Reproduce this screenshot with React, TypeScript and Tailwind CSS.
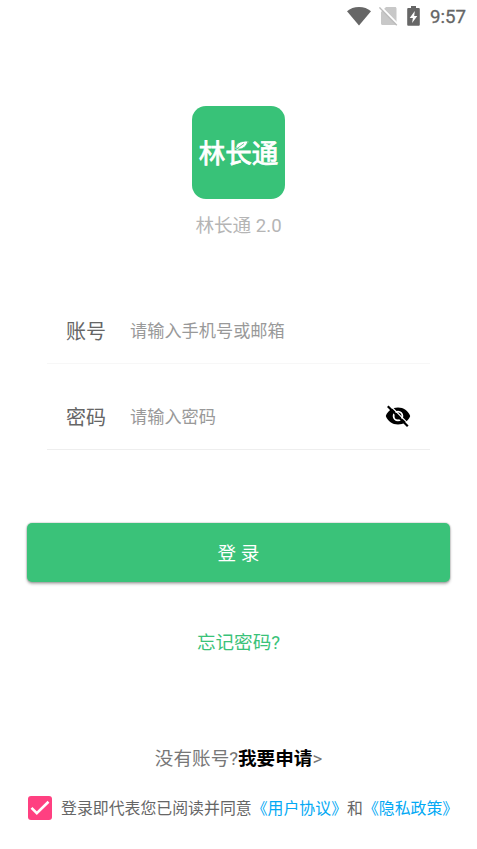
import { useState } from 'react'

const fields = [
  { name: 'account', label: '账号', placeholder: '请输入手机号或邮箱', type: 'text', border: 'border-[#f7f7f7]' },
  { name: 'password', label: '密码', placeholder: '请输入密码', type: 'password', border: 'border-[#eeeeee]' },
]

function StatusBar() {
  return (
    <div className="flex h-8 items-center justify-end pr-[11px] text-[#666666]">
      <svg width="24" height="19" viewBox="0 0 24 19" fill="currentColor">
        <path d="M0 4.300C3.200 1.500 7.300 0 12 0s8.800 1.500 12 4.300L12 18.600z" />
      </svg>
      <svg width="19" height="20" viewBox="0 0 19 20" className="ml-2">
        <path d="M7 1h9c.9 0 1.500.6 1.500 1.500v15c0 .9-.6 1.500-1.500 1.500H3.500c-.9 0-1.500-.6-1.500-1.500V6z" fill="#c8c8c8" />
        <path d="M1.300.6 18.800 18.400" stroke="#ffffff" strokeWidth="2.400" />
        <path d="M.4 1.400 17.800 19.200" stroke="#bcbcbc" strokeWidth="1.500" />
      </svg>
      <svg width="13" height="20" viewBox="0 0 13 20" className="ml-[9px]">
        <path d="M4 0h5v2h2.500c.8 0 1.300.5 1.300 1.300v15.200c0 .8-.5 1.300-1.300 1.300h-10C.7 19.800.2 19.300.2 18.500V3.300C.2 2.500.7 2 1.500 2H4z" fill="currentColor" />
        <path d="M7.800 5 2.700 12h3.200l-.8 5 5.200-7H7.200z" fill="#ffffff" />
      </svg>
      <span className="ml-[10px] pt-px text-[18.7px] leading-8 [-webkit-text-stroke:0.3px_#666666]">9:57</span>
    </div>
  )
}

function Logo() {
  return (
    <div className="relative flex h-[93px] w-[93px] items-center justify-center rounded-[14px] bg-[#38c278]">
      <span className="pt-0.5 text-[26.5px] leading-[30px] font-normal whitespace-nowrap text-white [-webkit-text-stroke:0.8px_#ffffff]">
        林长通
      </span>
      {/* Leaf resting on the middle character */}
      <svg className="absolute inset-0" width="93" height="93" viewBox="0 0 93 93" fill="none">
        <path d="M44 42c-.5-4.500 4-7 12-7-1.500 5.500-5 8.500-10 8z" fill="#ffffff" stroke="#38c278" strokeWidth=".8" />
        <path d="m45 42.500 7-5" stroke="#38c278" strokeWidth=".8" />
      </svg>
    </div>
  )
}

function EyeOff() {
  return (
    <svg width="28" height="28" viewBox="0 0 28 28">
      <path
        fill="#000000"
        fillRule="evenodd"
        d="M14 5.500C8.500 5.500 3.800 8.600 1.800 14c2 5.400 6.700 8.500 12.200 8.500s10.200-3.100 12.200-8.500c-2-5.400-6.700-8.500-12.200-8.500zM14 19.300a5.300 5.300 0 1 1 0-10.600 5.300 5.300 0 0 1 0 10.600zm0-8.800a3.500 3.500 0 1 0 0 7 3.500 3.500 0 0 0 0-7z"
      />
      <path d="M5.600 3 25.500 22.900" stroke="#ffffff" strokeWidth="1.200" />
      <path d="M3.800 4.200 23.800 24.200" stroke="#000000" strokeWidth="2.200" />
    </svg>
  )
}

export default function App() {
  const [visible, setVisible] = useState(false)
  const [agreed, setAgreed] = useState(true)

  return (
    <div className="flex h-[849px] w-[477px] flex-col overflow-hidden bg-white font-['Roboto','Noto_Sans_CJK_SC',sans-serif]">
      <StatusBar />

      <header className="mt-[74px] flex flex-col items-center">
        <Logo />
        <h1 className="mt-[13px] text-[18.6px] leading-7 text-[#b5b5b5]">林长通 2.0</h1>
      </header>

      <form className="mt-[37px] flex flex-col px-[47px]">
        {fields.map((field) => (
          <label
            key={field.name}
            className={`flex h-[86px] items-end border-b pb-[17px] pl-[19px] first:h-[87px] ${field.border}`}
          >
            <span className="-mb-px w-16 text-[20px] leading-[30px] text-[#666666]">{field.label}</span>
            <input
              type={field.type === 'password' && visible ? 'text' : field.type}
              placeholder={field.placeholder}
              className="h-[30px] min-w-0 flex-1 text-[17.2px] leading-[30px] outline-none placeholder:text-[#999999]"
            />
            {field.type === 'password' && (
              <button type="button" onClick={() => setVisible(!visible)} className="mr-[18px] mb-0.5">
                <EyeOff />
              </button>
            )}
          </label>
        ))}
      </form>

      <button className="mx-[27px] mt-[73px] h-[59px] shrink-0 rounded-[5px] bg-[#3ac279] pt-1 text-[18.6px] text-white shadow-[0_0_1px_1px_rgba(0,0,0,0.1),0_2px_3px_rgba(0,0,0,0.3)]">
        登 录
      </button>

      <a href="#" className="mt-[47px] self-center text-[18.6px] leading-7 text-[#3ac279]">
        忘记密码?
      </a>

      <p className="mt-[88px] text-center text-[18.6px] leading-7 text-[#777777]">
        没有账号?<a href="#" className="font-bold text-black">我要申请</a>&gt;
      </p>

      <div className="mt-[23px] flex items-center pl-7">
        <button
          onClick={() => setAgreed(!agreed)}
          className="flex h-6 w-6 items-center justify-center rounded-[3px] bg-[#ff4081]"
        >
          {agreed && (
            <svg width="24" height="24" viewBox="0 0 24 24" fill="none">
              <path d="m3.500 11.800 5.300 5.300L20.500 5.800" stroke="#ffffff" strokeWidth="2.600" />
            </svg>
          )}
        </button>
        <p className="ml-[9px] h-6 pt-px text-[15.9px] leading-6 whitespace-nowrap text-[#666666]">
          登录即代表您已阅读并同意<a href="#" className="text-[#03a9f4]">《用户协议》</a>和
          <a href="#" className="text-[#03a9f4]">《隐私政策》</a>
        </p>
      </div>
    </div>
  )
}
